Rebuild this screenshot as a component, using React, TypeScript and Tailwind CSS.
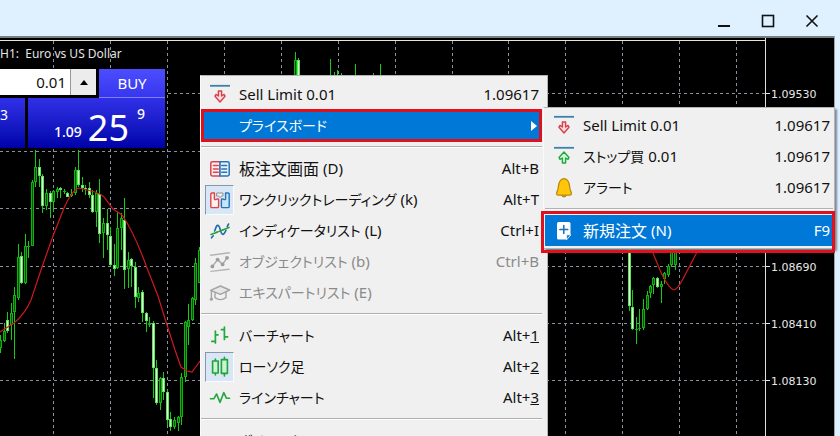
import type { ReactNode } from "react";

// x, high, low, body top, body bottom, rising
type Candle = [number, number, number, number, number, boolean];

const candles: Candle[] = [
    [0, 335, 353, 340, 348, true],
    [4, 323, 342, 331, 341, true],
    [7, 312, 333, 320, 331, false],
    [11, 303, 340, 313, 325, true],
    [14, 287, 359, 295, 312, true],
    [18, 244, 300, 257, 298, true],
    [21, 252, 284, 256, 283, false],
    [25, 234, 284, 246, 283, true],
    [28, 241, 258, 246, 247, true],
    [32, 180, 246, 182, 246, true],
    [35, 150, 187, 167, 182, true],
    [39, 159, 187, 167, 176, false],
    [42, 174, 213, 176, 206, false],
    [46, 189, 210, 193, 206, true],
    [50, 191, 218, 193, 202, false],
    [53, 190, 212, 191, 202, true],
    [57, 187, 198, 189, 192, true],
    [60, 187, 198, 188, 190, false],
    [64, 189, 194, 191, 192, true],
    [67, 192, 197, 193, 197, false],
    [71, 189, 197, 194, 196, true],
    [75, 167, 195, 170, 193, true],
    [78, 150, 187, 170, 185, false],
    [82, 177, 192, 185, 188, false],
    [85, 185, 195, 188, 189, false],
    [89, 182, 198, 188, 195, false],
    [92, 190, 213, 195, 212, false],
    [96, 190, 227, 193, 212, true],
    [99, 179, 243, 194, 234, false],
    [103, 218, 258, 223, 233, true],
    [107, 209, 250, 223, 235, false],
    [110, 227, 266, 236, 265, false],
    [114, 244, 276, 265, 269, false],
    [117, 212, 269, 228, 268, true],
    [121, 213, 250, 218, 228, true],
    [124, 198, 289, 220, 270, false],
    [128, 252, 288, 260, 269, true],
    [131, 258, 287, 259, 266, false],
    [135, 262, 308, 267, 297, false],
    [138, 287, 302, 293, 298, true],
    [142, 290, 322, 292, 313, false],
    [146, 312, 332, 313, 321, false],
    [149, 317, 327, 323, 325, true],
    [153, 321, 398, 323, 368, false],
    [156, 360, 405, 368, 403, false],
    [160, 377, 410, 378, 403, true],
    [163, 372, 400, 378, 392, false],
    [167, 390, 425, 392, 420, false],
    [170, 412, 431, 419, 427, false],
    [174, 417, 429, 420, 427, true],
    [178, 416, 431, 417, 423, true],
    [181, 373, 425, 377, 417, true],
    [185, 321, 382, 322, 377, true],
    [188, 304, 345, 320, 327, true],
    [192, 297, 321, 298, 320, true],
    [195, 258, 305, 263, 300, true],
    [199, 247, 283, 250, 283, true],
    [295, 52, 90, 60, 90, true],
    [298, 58, 90, 60, 90, false],
    [330, 59, 90, 80, 90, true],
    [334, 72, 90, 80, 90, true],
    [337, 70, 90, 80, 90, true],
    [341, 73, 90, 80, 90, true],
    [355, 64, 90, 80, 90, true],
    [373, 73, 90, 80, 90, true],
    [380, 64, 90, 80, 90, true],
    [629, 240, 311, 245, 306, false],
    [632, 290, 330, 307, 329, false],
    [636, 317, 344, 329, 330, true],
    [639, 309, 331, 328, 329, true],
    [643, 299, 330, 309, 328, true],
    [647, 291, 310, 295, 309, true],
    [650, 285, 298, 286, 293, true],
    [653, 277, 294, 278, 285, true],
    [657, 277, 288, 278, 287, false],
    [661, 281, 303, 284, 287, true],
    [664, 272, 284, 273, 279, true],
    [668, 264, 277, 266, 275, true],
    [671, 240, 267, 245, 265, true],
    [675, 240, 270, 245, 265, true],
];

const gridX = [53, 110, 167, 224, 281, 338, 395, 452, 508, 565, 622, 679, 736];
const gridY = [93, 151, 208, 266, 323, 380];
const prices: [string, number][] = [
    ["1.09530", 93],
    ["1.08690", 266],
    ["1.08410", 323],
    ["1.08130", 380],
];

function Chart() {
    return (
        <svg className="block h-full w-full" aria-label="EURUSD H1 chart">
            <g transform="translate(0 -36)">
                <g stroke="#8791a0" strokeDasharray="3 3" shapeRendering="crispEdges">
                    {gridX.map((x) => (
                        <line key={x} x1={x + 0.5} x2={x + 0.5} y1="41" y2="2000" />
                    ))}
                    {gridY.map((y) => (
                        <line key={y} x1="0" x2="100%" y1={y + 0.5} y2={y + 0.5} />
                    ))}
                </g>
                <g shapeRendering="crispEdges">
                    {candles.map(([x, high, low, top, bottom, up]) => (
                        <g key={x}>
                            <rect x={x} y={high} width="1" height={low - high} fill="#14cc14" />
                            <rect
                                x={x - 1}
                                y={top}
                                width="3"
                                height={Math.max(1, bottom - top)}
                                fill={up ? "#0cb40c" : "#58e858"}
                            />
                            <rect
                                x={x}
                                y={top + 1}
                                width="1"
                                height={Math.max(0, bottom - top - 2)}
                                fill={up ? "#045004" : "#e0ffd8"}
                            />
                        </g>
                    ))}
                </g>
                <g fill="none" stroke="#d01820" strokeWidth="1.2">
                    <path d="M0 332L14 323Q25 314 31 300L42 267L53 236L64 208Q72 190 79 188L95 192Q101 194 104 197L113 209L122 215Q134 232 147 268L158 296L167 325L175 350L181 367L187 371L192 372L200 361" />
                    <path d="M650 246L660 270Q668 288 674 290Q678 289 684 277L698 250" />
                </g>
            </g>
        </svg>
    );
}

function PriceAxis() {
    return (
        <svg className="block h-full w-full">
            <g transform="translate(0 -36)">
                {prices.map(([label, y]) => (
                    <g key={label}>
                        <rect x="0" y={y} width="4" height="1" fill="#e8e8e8" />
                        <text x="5" y={y + 5} fill="#e8e8e8" className="font-['DejaVu_Sans',sans-serif] text-[11px]">
                            {label}
                        </text>
                    </g>
                ))}
            </g>
        </svg>
    );
}

function Icon({ children }: { children: ReactNode }) {
    return (
        <svg viewBox="0 0 22 22" width="22" height="22" fill="none" strokeLinecap="round" strokeLinejoin="round" aria-hidden="true">
            {children}
        </svg>
    );
}

const sellIcon = (
    <Icon>
        <path d="M1 1.8H21" stroke="#3c80ad" strokeWidth="1.8" strokeLinecap="butt" />
        <path d="M9.4 7H12.6V12L15 10.4L16 12.2L11 18L6 12.2L7 10.4L9.4 12Z" fill="#fbdcdc" stroke="#d8404c" strokeWidth="1.4" />
    </Icon>
);
const buyIcon = (
    <Icon>
        <path d="M1 1.8H21" stroke="#3c80ad" strokeWidth="1.8" strokeLinecap="butt" />
        <path d="M9.4 17H12.6V12L15 13.4L16 11.4L11 6L6 11.4L7 13.4L9.4 12Z" fill="#d4f6d8" stroke="#22a83e" strokeWidth="1.4" />
    </Icon>
);
const bellIcon = (
    <Icon>
        <path d="M8.5 18.5a2.6 2 0 0 0 5 0Z" fill="#e0a000" stroke="#b07c08" />
        <path d="M11 1.6C6.5 1.8 5.5 6 5.2 11C5 13.6 3.4 15 3.6 17Q3.8 18.2 5 18.2H17Q18.2 18.2 18.4 17C18.6 15 17 13.6 16.8 11C16.5 6 15.5 1.8 11 1.6Z" fill="#ffc60a" stroke="#bd8a10" strokeWidth="1.3" />
    </Icon>
);
const newOrderIcon = (
    <Icon>
        <path d="M5.5 2H16Q17.5 2 17.5 3.5V14.5L13.5 19.5H5.5Q4 19.5 4 18V3.5Q4 2 5.5 2Z" fill="#fff" />
        <path d="M17.5 14.8H14.6Q13.6 14.8 13.6 15.8V19.4Z" fill="#1970b8" stroke="#fff" strokeWidth="0.8" />
        <path d="M10.8 5.5V13.5M6.8 9.5H14.8" stroke="#1970b8" strokeWidth="1.5" />
    </Icon>
);
const depthIcon = (
    <Icon>
        <path d="M11 3.8H3.4Q1.8 3.8 1.8 5.2V16.6Q1.8 18 3.4 18H11Z" fill="#fff0f0" stroke="#db444c" strokeWidth="1.5" />
        <path d="M11 3.8H18.6Q20.2 3.8 20.2 5.2V16.6Q20.2 18 18.6 18H11Z" fill="#e6f2fd" stroke="#2873b4" strokeWidth="1.5" />
        <path d="M4.4 7.6H9.2M4.4 10.9H9.2M4.4 14.2H9.2" stroke="#db444c" strokeWidth="1.5" />
        <path d="M12.8 7.6H17.6M12.8 10.9H17.6M12.8 14.2H17.6" stroke="#2873b4" strokeWidth="1.5" />
    </Icon>
);
const oneClickIcon = (
    <Icon>
        <path d="M2.6 4H5.4V10Q6.2 11.2 7.6 10.2Q9.6 9.4 9.6 11V17.4Q9.6 18.6 8.4 18.6H3Q1.8 18.6 1.8 17.4V4.8Z" fill="#fff0ee" stroke="#db444c" strokeWidth="1.4" />
        <path d="M19.4 4H16.6V10Q15.8 11.2 14.4 10.2Q12.4 9.4 12.4 11V17.4Q12.4 18.6 13.6 18.6H19Q20.2 18.6 20.2 17.4V4.8Z" fill="#c8e6fa" stroke="#2873b4" strokeWidth="1.4" />
        <path d="M8 4H14V7H12.5L11 8.6L9.6 7H8Z" fill="#eee" stroke="#909090" />
    </Icon>
);
const indicatorIcon = (
    <Icon>
        <path d="M2 14.5L8 12.2M13.6 10L20 7.4" stroke="#20a53c" strokeWidth="1.6" />
        <path d="M2.5 17.8L4.2 15.8M5.6 11L7.4 6.4Q9 4 10.4 7L12.2 12.6Q13.8 16 15.6 12.8L17 10.4M18.2 6.6L19.6 4" stroke="#2466ac" strokeWidth="1.6" />
        <path d="M7 12.6L14.4 9.7" stroke="#20a53c" strokeWidth="1.3" />
    </Icon>
);
const objectsIcon = (
    <Icon>
        <path d="M1.6 4.2L20.4 1.8M2 20.4L20 18.2" stroke="#b4b4b4" strokeWidth="1.4" />
        <path d="M3.4 15.4L8.6 8.6L13.6 13.4L18 6.8" stroke="#ababab" strokeWidth="1.5" />
        <g fill="#9c9c9c">
            <circle cx="3.4" cy="15.4" r="1.9" />
            <circle cx="8.6" cy="8.6" r="1.9" />
            <circle cx="13.6" cy="13.4" r="1.9" />
            <circle cx="18" cy="6.8" r="1.9" />
        </g>
    </Icon>
);
const expertsIcon = (
    <Icon>
        <path d="M1.6 8.4L11.4 4L20.6 8L11.4 12.4Z" fill="#e6e6e6" stroke="#a4a4a4" strokeWidth="1.4" />
        <path d="M6 10.6V15.6Q11.4 19.6 17 15.6V10.2" stroke="#a4a4a4" strokeWidth="1.4" />
        <path d="M2.4 9V16" stroke="#a4a4a4" strokeWidth="1.4" />
        <circle cx="2.4" cy="17.2" r="1.6" fill="#a4a4a4" />
    </Icon>
);
const barsIcon = (
    <Icon>
        <path d="M6.4 6V18M2.8 16.4H6.4M6.4 9.8H9M15.4 2.2V14.4M12.4 4.6H15.4M15.4 11.8H18.6" stroke="#22a83e" strokeWidth="1.7" />
    </Icon>
);
const candlesIcon = (
    <Icon>
        <path d="M6.4 3V5M6.4 17V19M15.4 1.4V3.4M15.4 17.4V20" stroke="#1da53a" strokeWidth="1.6" />
        <rect x="3.6" y="5" width="5.6" height="12" fill="#cdf2d4" stroke="#1da53a" strokeWidth="1.6" />
        <rect x="12.4" y="3.6" width="6" height="13.8" fill="#cdf2d4" stroke="#1da53a" strokeWidth="1.6" />
    </Icon>
);
const lineIcon = (
    <Icon>
        <path d="M1.4 11.8H4.8L7.6 7L11 15.4L14.8 5.6L17.4 11.2H20.6" stroke="#22a83e" strokeWidth="1.6" />
    </Icon>
);

type Item = {
    label: string;
    hint?: string;
    shortcut?: ReactNode;
    icon?: ReactNode;
    latin?: boolean;
    kanji?: boolean;
    checked?: boolean;
    disabled?: boolean;
    active?: boolean;
    submenu?: boolean;
};

const chartMenu: Item[][] = [
    [
        { label: "Sell Limit 0.01", shortcut: "1.09617", icon: sellIcon, latin: true },
        { label: "プライスボード", active: true, submenu: true },
    ],
    [
        { label: "板注文画面", hint: "(D)", shortcut: "Alt+B", icon: depthIcon, kanji: true },
        { label: "ワンクリックトレーディング", hint: "(k)", shortcut: "Alt+T", icon: oneClickIcon, checked: true },
        { label: "インディケータリスト", hint: "(L)", shortcut: "Ctrl+I", icon: indicatorIcon },
        { label: "オブジェクトリスト", hint: "(b)", shortcut: "Ctrl+B", icon: objectsIcon, disabled: true },
        { label: "エキスパートリスト", hint: "(E)", icon: expertsIcon, disabled: true },
    ],
    [
        { label: "バーチャート", shortcut: <>Alt+<u>1</u></>, icon: barsIcon },
        { label: "ローソク足", shortcut: <>Alt+<u>2</u></>, icon: candlesIcon, checked: true },
        { label: "ラインチャート", shortcut: <>Alt+<u>3</u></>, icon: lineIcon },
    ],
    [{ label: "ボリューム" }],
];

const priceMenu: Item[][] = [
    [
        { label: "Sell Limit 0.01", shortcut: "1.09617", icon: sellIcon, latin: true },
        { label: "ストップ買", hint: "0.01", shortcut: "1.09617", icon: buyIcon },
        { label: "アラート", shortcut: "1.09617", icon: bellIcon },
    ],
    [{ label: "新規注文", hint: "(N)", shortcut: "F9", icon: newOrderIcon, kanji: true, active: true }],
];

function MenuRow({ item, frame }: { item: Item; frame: string }) {
    const color = item.active ? "bg-[#0078d7] text-white" : item.disabled ? "text-[#8a8a8a]" : "text-[#111]";
    const size = item.latin ? "text-[15px]" : item.kanji ? "text-base" : "text-sm";
    return (
        <button
            type="button"
            role="menuitem"
            disabled={item.disabled}
            className={`relative flex h-[31px] w-full items-center whitespace-nowrap pl-1 pr-[3px] text-left ${color}`}
        >
            <span
                className={`flex h-[30px] w-[29px] shrink-0 items-center justify-center border ${
                    item.checked ? "border-[#f8fbff] border-l-[#8795ad] border-t-[#8795ad] bg-[#d9e6f5]" : "border-transparent"
                }`}
            >
                {item.icon}
            </span>
            <span className={`ml-[5px] ${size} [font-feature-settings:'palt']`}>{item.label}</span>
            {item.hint && <span className="ml-1 text-[15px]">{item.hint}</span>}
            <span className="ml-auto text-[15px]">{item.shortcut}</span>
            {item.submenu && <span className="mr-0.5 border-y-[5px] border-l-[6px] border-y-transparent border-l-white" />}
            {item.active && <span className={`pointer-events-none absolute border-[3px] border-[#e0101c] ${frame}`} />}
        </button>
    );
}

function Menu({ groups, className, frame }: { groups: Item[][]; className: string; frame: string }) {
    return (
        <div role="menu" className={`absolute border border-[#b4b4b4] border-l-[#fafafa] bg-[#f0f0f0] ${className}`}>
            {groups.map((group, i) => (
                <div key={i}>
                    {i > 0 && (
                        <div role="separator" className="flex h-3 items-center">
                            <div className="h-0.5 w-full border-b border-t border-b-white border-t-[#b0b0b0]" />
                        </div>
                    )}
                    {group.map((item) => (
                        <MenuRow key={item.label} item={item} frame={frame} />
                    ))}
                </div>
            ))}
        </div>
    );
}

function TradePanel() {
    return (
        <div className="absolute left-0 top-[33px] w-[165px] bg-black text-white">
            <div className="flex h-[29px] gap-[3px]">
                <div className="flex h-[26px] min-w-0 flex-1 bg-white">
                    <input
                        aria-label="Volume"
                        defaultValue="0.01"
                        className="w-full min-w-0 flex-1 bg-white pr-1 text-right text-[15px] text-[#111] outline-none"
                    />
                    <button
                        type="button"
                        aria-label="Increase volume"
                        className="flex w-[26px] items-center justify-center border-l border-[#999] bg-[#ececec]"
                    >
                        <span className="border-x-4 border-b-[5px] border-x-transparent border-b-black" />
                    </button>
                </div>
                <button type="button" className="w-[66px] border-b border-[#8080ff] bg-linear-to-b from-[#4d4dff] to-[#3636ee] text-[15px]">
                    BUY
                </button>
            </div>
            <div className="flex h-[50px] gap-[3px]">
                <button type="button" className="w-[25px] bg-linear-to-b from-[#3030e8] to-[#0000a8] pb-4 pr-5 text-right text-sm">
                    3
                </button>
                <button
                    type="button"
                    className="flex flex-1 items-end justify-end bg-linear-to-b from-[#3030e8] to-[#0000a8] pr-5"
                >
                    <span className="pb-1.5 text-sm font-medium">1.09</span>
                    <span className="ml-1.5 text-4xl">25</span>
                    <span className="ml-2 self-start pt-1.5 text-sm font-medium">9</span>
                </button>
            </div>
        </div>
    );
}

export default function App() {
    return (
        <div className="flex h-screen flex-col overflow-hidden bg-[#dff0ff] font-['Noto_Sans','Noto_Sans_CJK_JP',sans-serif]">
            <header className="flex h-9 shrink-0 justify-end gap-[14px] pr-[13px] pt-1.5 text-[#111]">
                <button type="button" aria-label="Minimize" className="flex size-[30px] items-center justify-center">
                    <svg width="14" height="14" stroke="currentColor" strokeWidth="2"><path d="M1 12H13" /></svg>
                </button>
                <button type="button" aria-label="Maximize" className="flex size-[30px] items-center justify-center">
                    <svg width="14" height="14" fill="none" stroke="currentColor" strokeWidth="1.6"><rect x="1.5" y="1.5" width="11" height="11" /></svg>
                </button>
                <button type="button" aria-label="Close" className="flex size-[30px] items-center justify-center">
                    <svg width="14" height="14" stroke="currentColor" strokeWidth="1.6"><path d="M1.5 1.5L12.5 12.5M12.5 1.5L1.5 12.5" /></svg>
                </button>
            </header>
            <main className="relative mr-[5px] flex min-h-0 flex-1 border-r border-[#9aa4ac] bg-black">
                <div className="min-w-0 flex-1 border-r border-[#e0e0d8]">
                    <Chart />
                </div>
                <div className="w-[68px] shrink-0">
                    <PriceAxis />
                </div>
                <div className="absolute left-0 right-0 top-0 h-0.5 bg-[#77807f]" />
                <div className="absolute left-0 right-[68px] top-1 h-px bg-[#e6e6d4]" />
                <p className="absolute left-0 top-2 whitespace-pre text-xs leading-5 text-[#e4e4e4]">H1:  Euro vs US Dollar</p>
                <TradePanel />
                <Menu groups={chartMenu} className="left-[200px] top-[39px] w-[348px] pr-[5px] pt-[3px]" frame="left-0 right-0 -inset-y-px" />
                <Menu
                    groups={priceMenu}
                    className="left-[543px] top-[71px] w-[292px] px-px pb-0.5 pt-0.5 shadow-[2px_2px_2px_#7c8894]"
                    frame="-left-1 -right-0.5 -top-1 -bottom-[7px]"
                />
            </main>
        </div>
    );
}
